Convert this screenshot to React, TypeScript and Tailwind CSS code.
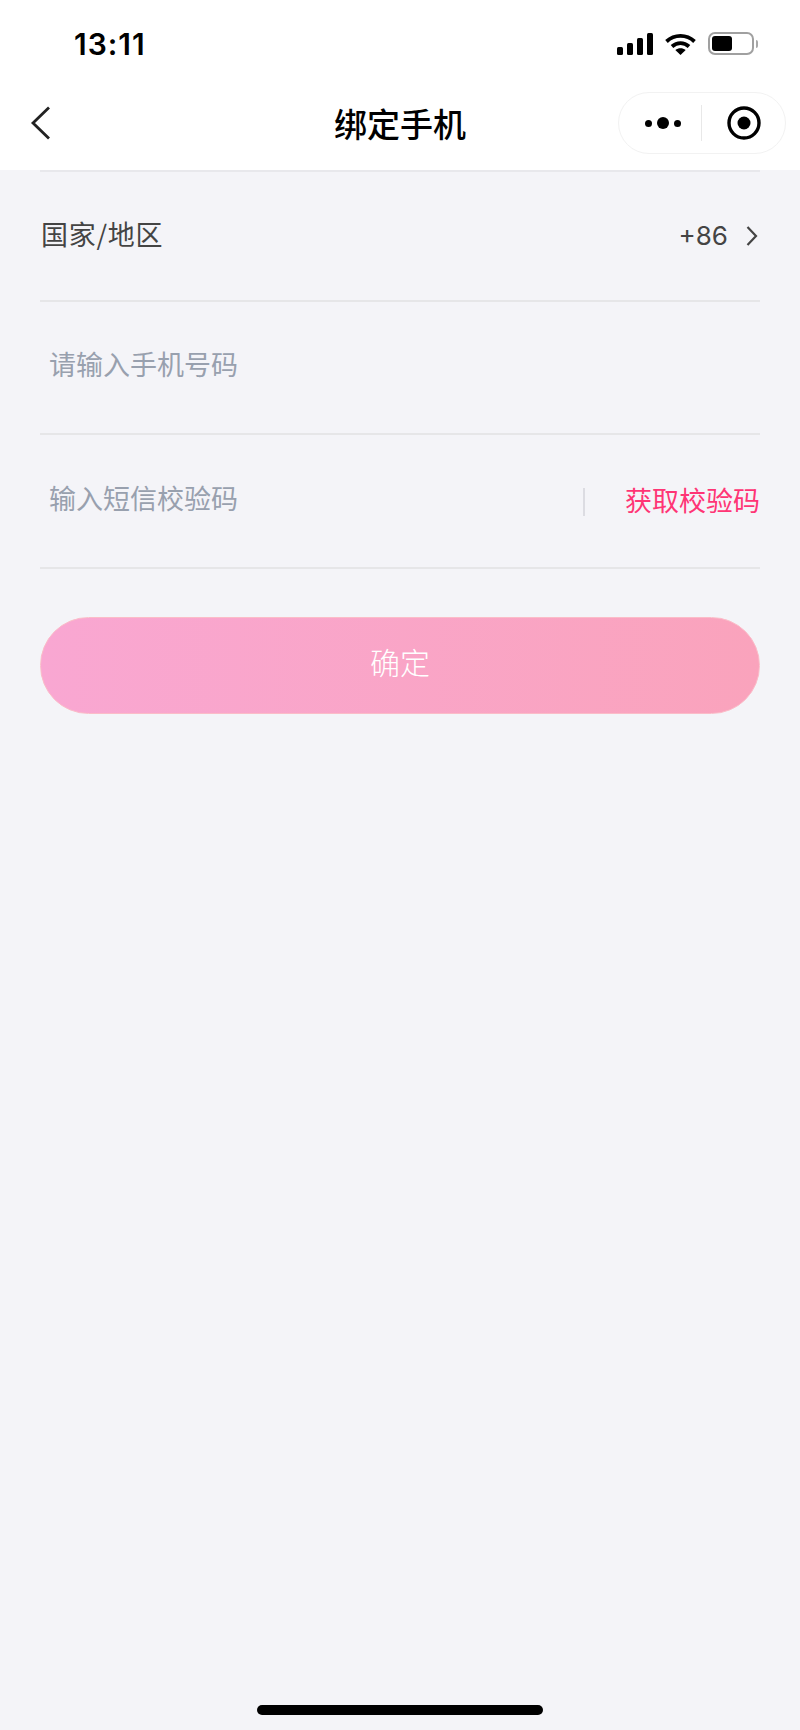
const cjk = "font-['Noto_Sans_CJK_SC','Noto_Sans',sans-serif]";

function StatusIcons() {
  return (
    <div className="flex items-center">
      {/* signal */}
      <svg width="36" height="24" viewBox="0 0 36 24" fill="#000">
        <rect x="0" y="15" width="6" height="8" rx="1.5" />
        <rect x="10" y="11" width="6" height="12" rx="1.5" />
        <rect x="20" y="6" width="6" height="17" rx="1.5" />
        <rect x="30" y="1" width="6" height="22" rx="1.5" />
      </svg>
      {/* wifi */}
      <svg className="ml-[11px]" width="33" height="24" viewBox="0 0 32 24" fill="none" stroke="#000" strokeWidth="3.8">
        <path d="M2 9.5 C10 2 22 2 30 9.5" />
        <path d="M7.5 14.5 C12.5 10 19.5 10 24.5 14.5" />
        <path d="M16 23 L10.8 18 C14 15.6 18 15.6 21.2 18 Z" fill="#000" stroke="none" />
      </svg>
      {/* battery */}
      <div className="ml-[11px] flex items-center">
        <div className="flex h-[23px] w-[46px] items-center rounded-[7px] border-2 border-[#a0a0a0] p-[2px]">
          <div className="h-full w-[20px] rounded-[3px] bg-black" />
        </div>
        <div className="ml-[2px] h-[8px] w-[2px] rounded-r-full bg-[#a8a8a8]" />
      </div>
    </div>
  );
}

function Capsule() {
  return (
    <div className="flex h-[62px] w-[168px] items-center rounded-full border border-[#f2f2f2] bg-white">
      <div className="flex w-[82px] items-center justify-center gap-[5px] pl-[5px]">
        <span className="size-[7px] rounded-full bg-black" />
        <span className="size-[12px] rounded-full bg-black" />
        <span className="size-[7px] rounded-full bg-black" />
      </div>
      <div className="h-[36px] w-px bg-[#e8e8e8]" />
      <div className="flex flex-1 items-center justify-center">
        <svg width="36" height="36" viewBox="0 0 36 36">
          <circle cx="18" cy="18" r="15" fill="none" stroke="#000" strokeWidth="3.4" />
          <circle cx="18" cy="18" r="6.5" fill="#000" />
        </svg>
      </div>
    </div>
  );
}

export default function App() {
  return (
    <div className={`flex h-[1730px] w-[800px] flex-col overflow-hidden bg-[#f4f4f8] ${cjk}`}>
      {/* status + nav */}
      <div className="h-[170px] shrink-0 bg-white">
        <div className="flex h-[87px] items-center justify-between pl-[74px] pr-[42px]">
          <span className="font-['Inter',sans-serif] text-[30px] font-semibold leading-none tracking-[1px] text-black">13:11</span>
          <StatusIcons />
        </div>
        <div className="relative mt-[5px] flex h-[62px] items-center justify-between pl-[30px] pr-[14px]">
          <svg width="22" height="36" viewBox="0 0 22 36" fill="none" stroke="#222" strokeWidth="2.8">
            <path d="M19 2.5 L3 18 L19 33.5" />
          </svg>
          <span className="absolute inset-x-0 text-center text-[33px] font-medium leading-[62px] text-black">绑定手机</span>
          <div className="relative">
            <Capsule />
          </div>
        </div>
      </div>

      <div className="flex flex-col px-[40px]">
        <div className="flex h-[132px] items-start justify-between border-y-2 border-t-[#e8e8ec] border-b-[#e6e6e8] pl-[1px] pt-[42px]">
          <span className="text-[27px] leading-[40px] tracking-[0.7px] text-[#444]">国家/地区</span>
          <div className="mt-[2px] flex items-center pr-[2px]">
            <span className="font-['Inter',sans-serif] text-[26px] leading-[40px] text-[#444]">+86</span>
            <svg className="ml-[18px]" width="12" height="22" viewBox="0 0 12 22" fill="none" stroke="#444" strokeWidth="2.2">
              <path d="M1.5 2 L10 11 L1.5 20" />
            </svg>
          </div>
        </div>
        <div className="flex h-[133px] items-start border-b-2 border-[#e6e6e8] pl-[9px] pt-[42px]">
          <span className="text-[27px] leading-[40px] text-[#98a0ae]">请输入手机号码</span>
        </div>
        <div className="flex h-[134px] items-start justify-between border-b-2 border-[#e6e6e8] pl-[9px] pt-[43px]">
          <span className="text-[27px] leading-[40px] text-[#98a0ae]">输入短信校验码</span>
          <div className="flex items-center">
            <div className="mt-[6px] h-[28px] w-[2px] bg-[#dcdce2]" />
            <span className="ml-[40px] mt-[2px] text-[27px] leading-[40px] text-[#ff3575]">获取校验码</span>
          </div>
        </div>
        <button className="mt-[48px] flex h-[97px] items-center justify-center rounded-full border border-[#fbbcc8] bg-gradient-to-r from-[#f9a7d2] to-[#faa3bc] pb-[9px] text-[30px] font-light text-white">
          确定
        </button>
      </div>

      {/* home indicator */}
      <div className="mt-auto flex justify-center pb-[15px]">
        <div className="h-[10px] w-[286px] rounded-full bg-black" />
      </div>
    </div>
  );
}
